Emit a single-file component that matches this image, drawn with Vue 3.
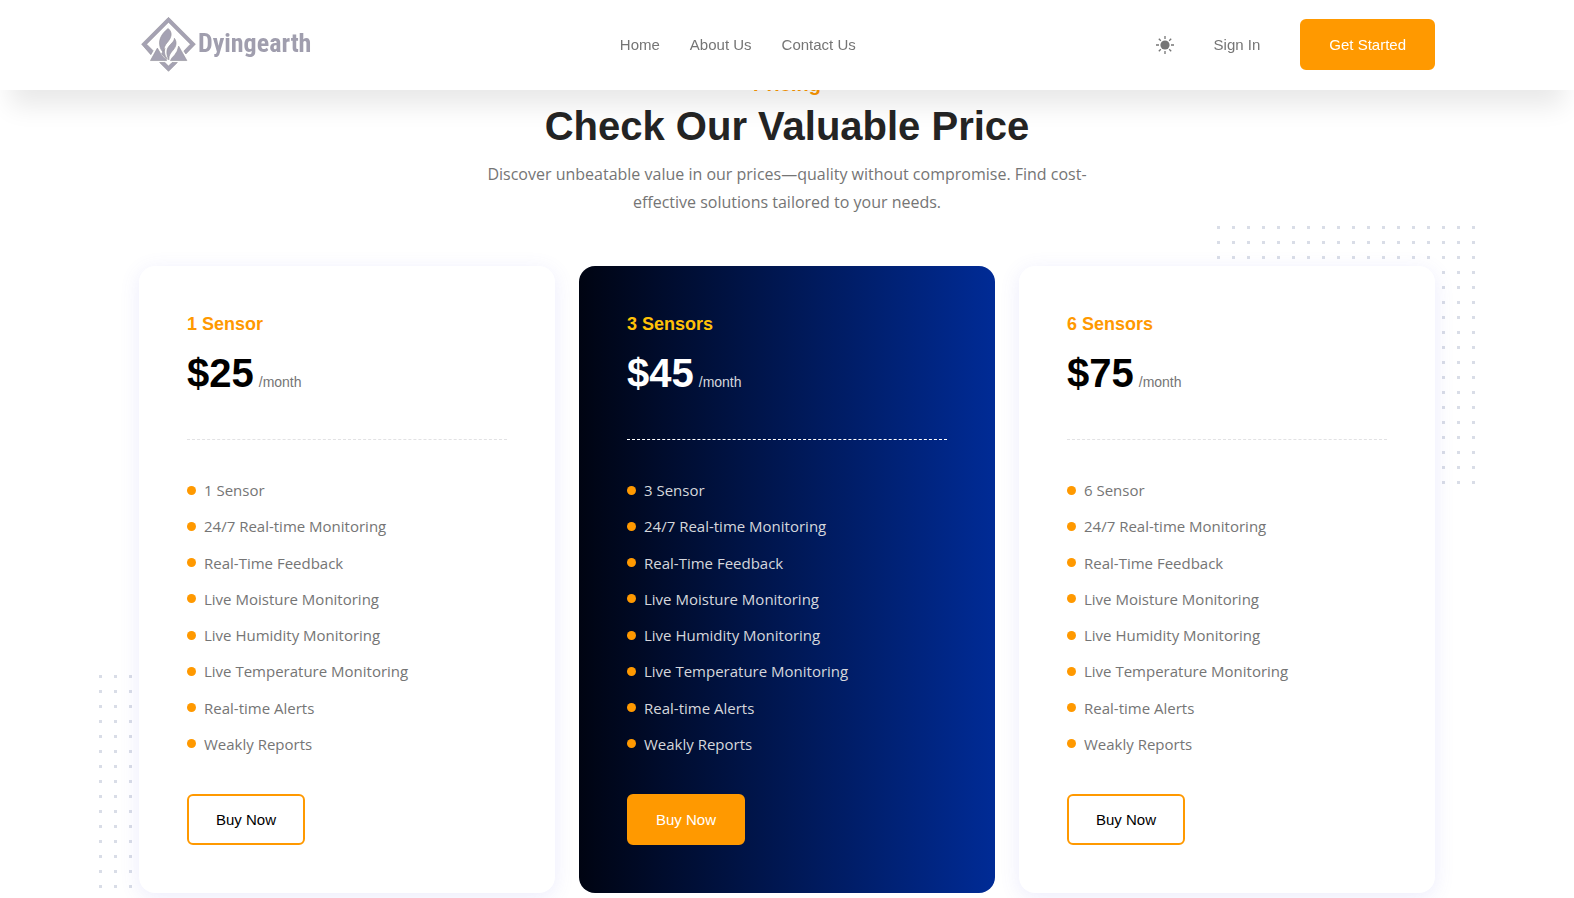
<script setup>
import { computed } from 'vue'

const navLinks = ['Home', 'About Us', 'Contact Us']

const sharedFeatures = [
  '24/7 Real-time Monitoring',
  'Real-Time Feedback',
  'Live Moisture Monitoring',
  'Live Humidity Monitoring',
  'Live Temperature Monitoring',
  'Real-time Alerts',
  'Weakly Reports',
]

const tiers = [
  { sensors: 1, name: '1 Sensor', price: 25, featured: false },
  { sensors: 3, name: '3 Sensors', price: 45, featured: true },
  { sensors: 6, name: '6 Sensors', price: 75, featured: false },
]

const plans = computed(() =>
  tiers.map((tier) => ({ ...tier, features: [`${tier.sensors} Sensor`, ...sharedFeatures] })),
)
</script>

<template>
  <div class="page">
    <header class="topbar">
      <div class="container topbar-inner">
        <a href="#" class="logo">
          <svg class="logo-mark" viewBox="32 48 166 168" aria-hidden="true">
            <path d="M61 163 L33 131 L115 49 L197 131 L168 161 L162 152 L182 131 L115 64 L48 131 L68 151 Z" />
            <path d="M88 187 H104 L115 198 L126 187 H142 L115 214 Z" />
            <path d="M60 181 L81 143 L88 155 Q92 166 108 177 L109 181 Z" />
            <path d="M121 181 Q124 173 134 164 Q143 154 146 137 L171 181 Z" />
            <path d="M114 83 C92 100 86 118 88 133 C89 145 95 152 101 158 C99 143 104 134 112 125 C122 113 130 97 114 83 Z" />
            <path d="M133 113 C134 127 109 134 110 156 C110 164 112 170 116 179 C116 163 122 157 129 149 C138 139 142 125 133 113 Z" />
            <path d="M104 144 C100 156 105 168 112 177 C106 172 99 166 94 160 Z" />
          </svg>
          <span class="logo-name">Dyingearth</span>
        </a>

        <nav class="nav" aria-label="Main">
          <a v-for="link in navLinks" :key="link" href="#">{{ link }}</a>
        </nav>

        <div class="actions">
          <button type="button" class="theme" aria-label="Toggle theme">
            <svg viewBox="0 0 18 18" aria-hidden="true">
              <circle cx="9" cy="9" r="4.6" fill="currentColor" />
              <path
                d="M9 0V3M9 15V18M0 9H3M15 9H18M2.8 2.8L4.8 4.8M13.2 13.2L15.2 15.2M2.8 15.2L4.8 13.2M13.2 4.8L15.2 2.8"
                stroke="currentColor"
                stroke-width="1.3"
              />
            </svg>
          </button>
          <a href="#" class="signin">Sign In</a>
          <a href="#" class="btn btn-solid">Get Started</a>
        </div>
      </div>
    </header>

    <main class="pricing">
      <div class="heading">
        <h6>Pricing</h6>
        <h2>Check Our Valuable Price</h2>
        <p>
          Discover unbeatable value in our prices—quality without compromise. Find cost-effective
          solutions tailored to your needs.
        </p>
      </div>

      <div class="container plans">
        <span class="dots dots-top"></span>
        <span class="dots dots-bottom"></span>
        <article
          v-for="plan in plans"
          :key="plan.name"
          class="plan"
          :class="{ featured: plan.featured }"
        >
          <h3>{{ plan.name }}</h3>
          <p class="price"><strong>${{ plan.price }}</strong><span>/month</span></p>
          <ul>
            <li v-for="feature in plan.features" :key="feature">{{ feature }}</li>
          </ul>
          <button type="button" class="btn" :class="plan.featured ? 'btn-solid' : 'btn-outline'">
            Buy Now
          </button>
        </article>
      </div>
    </main>
  </div>
</template>

<style>
body {
  margin: 0;
  background: #fff;
}
</style>

<style scoped>
.page {
  --accent: #ff9900;
  --text: #757575;
  min-height: 100vh;
  overflow: hidden;
  box-sizing: border-box;
  color: var(--text);
  font-family: "Liberation Sans", Arial, sans-serif;
  font-size: 15px;
}

.page a {
  color: inherit;
  text-decoration: none;
}

.container {
  max-width: 1296px;
  margin: 0 auto;
}

.topbar {
  position: fixed;
  top: 0;
  left: 0;
  right: 0;
  z-index: 10;
  background: #fff;
  box-shadow: 0 26px 26px -10px rgba(0, 0, 0, 0.09);
}

.topbar-inner {
  padding: 17px 0 18px;
  display: flex;
  align-items: center;
  justify-content: space-between;
}

.logo {
  display: flex;
  align-items: center;
  gap: 2px;
  min-width: 179px;
  padding-left: 2px;
}

.logo-mark {
  width: 55px;
  height: 55px;
  fill: #a5a2b3;
  stroke: #96949c;
  stroke-width: 2;
}

.page .logo-name {
  padding-bottom: 4px;
  color: #a09eae;
  font-family: "Liberation Sans Narrow", "Roboto Condensed", Roboto, sans-serif;
  font-size: 26px;
  font-weight: 700;
  line-height: 30px;
}

.nav {
  display: flex;
  gap: 30px;
}

.actions {
  display: flex;
  align-items: center;
  gap: 40px;
}

.theme {
  width: 18px;
  height: 18px;
  padding: 0;
  border: 0;
  background: none;
  color: var(--text);
  cursor: pointer;
}

.theme svg {
  display: block;
}

.btn {
  box-sizing: border-box;
  display: inline-block;
  padding: 0 27px;
  border: 2px solid var(--accent);
  border-radius: 6px;
  font-family: inherit;
  font-size: 15px;
  line-height: 47px;
  cursor: pointer;
}

.page .btn-solid {
  background: var(--accent);
  color: #fff;
}

.btn-outline {
  background: transparent;
  color: #000;
}

.pricing {
  padding: 72px 24px 4px;
}

.heading {
  max-width: 636px;
  margin: 0 auto 50px;
  text-align: center;
}

.heading h6 {
  margin: 0 0 6px;
  color: var(--accent);
  font-size: 20px;
  line-height: 24px;
}

.heading h2 {
  margin: 0 0 10px;
  color: #242424;
  font-size: 40px;
  line-height: 48px;
}

.heading p {
  margin: 0;
  font-family: "Open Sans", "Noto Sans", sans-serif;
  font-size: 16px;
  line-height: 28px;
}

.plans {
  position: relative;
  isolation: isolate;
  display: grid;
  grid-template-columns: repeat(3, 1fr);
  gap: 24px;
}

.dots {
  position: absolute;
  z-index: -1;
  width: 258px;
  height: 258px;
  background: conic-gradient(from 270deg at 3px 3px, #d9dde7 90deg, transparent 0) 0 0 / 15px 15px;
}

.dots-top {
  top: -40px;
  right: -40px;
}

.dots-bottom {
  bottom: -40px;
  left: -40px;
}

.plan {
  padding: 48px;
  border-radius: 16px;
  background: #fff;
  box-shadow: 0 4px 20px rgba(100, 100, 230, 0.12);
}

.plan h3 {
  margin: 0 0 15px;
  color: var(--accent);
  font-size: 18px;
  line-height: 20px;
}

.price {
  display: flex;
  align-items: baseline;
  gap: 5px;
  margin: 0 0 37px;
  padding-bottom: 33px;
  border-bottom: 1px dashed #e2e2e4;
  font-size: 14px;
  line-height: 48px;
}

.price strong {
  color: #000;
  font-size: 40px;
}

.plan ul {
  display: grid;
  gap: 10px;
  margin: 0 0 37px;
  padding: 0;
  list-style: none;
  font-family: "Open Sans", "Noto Sans", sans-serif;
  line-height: 1.75;
}

.plan li {
  display: flex;
  align-items: center;
  gap: 8px;
}

.plan li::before {
  content: "";
  width: 9px;
  height: 9px;
  border-radius: 50%;
  background: var(--accent);
}

.featured {
  background: linear-gradient(90deg, #000412, #002b96);
  box-shadow: none;
  color: #d5d7dc;
}

.featured h3 {
  color: #ffc107;
}

.featured .price {
  border-color: #fff;
}

.featured strong {
  color: #fff;
}
</style>
